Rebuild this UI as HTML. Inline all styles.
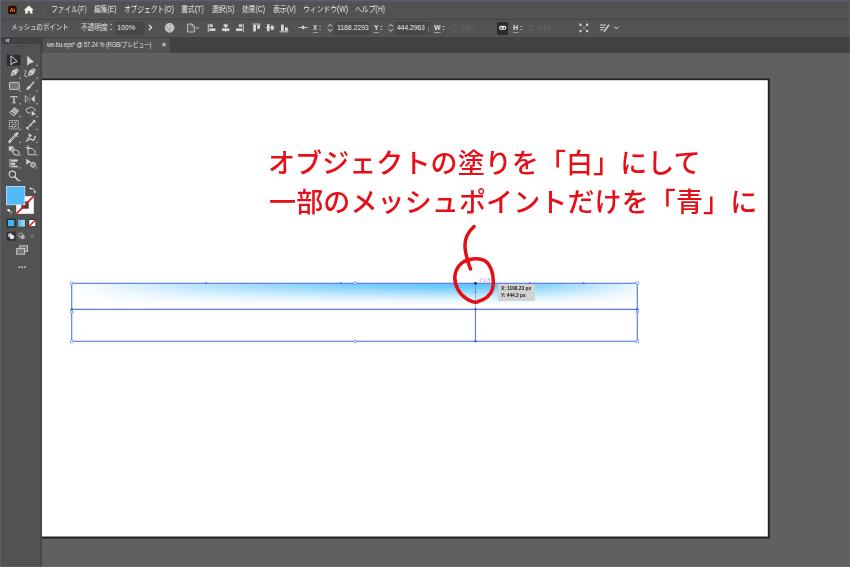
<!DOCTYPE html>
<html lang="ja">
<head>
<meta charset="utf-8">
<title>Illustrator mesh</title>
<style>
html,body{margin:0;padding:0;}
body{width:850px;height:567px;overflow:hidden;position:relative;background:#606060;font-family:"Liberation Sans","Noto Sans CJK JP",sans-serif;color:#e6e6e6;}
.abs{position:absolute;}
#menubar{left:0;top:0;width:850px;height:19px;background:#525252;}
#topline{left:0;top:0;width:850px;height:2px;background:linear-gradient(#5b5d6a 0,#5b5d6a 50%,#55565c 50%,#55565c 100%);}
#sep1{left:0;top:19px;width:850px;height:1px;background:#454545;}
#ctrlbar{left:0;top:20px;width:850px;height:17px;background:#535353;}
#tabbar{left:0;top:37px;width:850px;height:15.5px;background:#424242;}
#tab{left:43px;top:38px;width:127px;height:14.5px;background:#535353;}
#canvas{left:42px;top:52.5px;width:808px;height:515px;background:#606060;}
#toolbar{left:0;top:44px;width:42px;height:523px;background:#525252;}
#tooledge{left:40.4px;top:44px;width:1.6px;height:523px;background:linear-gradient(90deg,#4c4c4c,#3e3e3e);}
#toolhead{left:0;top:37px;width:42px;height:7px;background:#424242;}
#leftedge{left:0;top:0;width:1.3px;height:567px;background:linear-gradient(#62667a,#58626c 30%,#596468);}
.t{position:absolute;white-space:nowrap;transform-origin:0 50%;will-change:transform;}
.menu{font-size:8.4px;line-height:10px;top:4.2px;color:#ececec;}
.ctl{font-size:7.6px;line-height:10px;top:23.2px;color:#e6e6e6;}
.tabt{font-size:6.8px;line-height:9px;top:40px;color:#ececec;}
.field{position:absolute;top:22px;height:12.5px;background:#484848;border-radius:1px;}
.dim{color:#6e6e6e;}
.note{will-change:transform;position:absolute;color:#e60f18;font-weight:500;font-size:25px;line-height:30px;white-space:nowrap;transform-origin:0 50%;}
.tip{will-change:transform;position:absolute;left:497.5px;top:283.5px;width:36.5px;height:16.5px;background:#d2d2d2;border-radius:1px;}
.tip div{position:absolute;left:3px;font-size:4.8px;line-height:6px;color:#1c1c1c;font-weight:bold;white-space:nowrap;}
</style>
</head>
<body>
<div id="canvas" class="abs"></div>
<svg class="abs" style="left:0;top:0" width="850" height="567" viewBox="0 0 850 567">
  <rect x="42" y="78.4" width="727.8" height="460.2" fill="#242424"/>
  <rect x="42" y="80.2" width="725.8" height="456.3" fill="#ffffff"/>
</svg>

<div id="menubar" class="abs"></div>
<div id="topline" class="abs"></div>
<div id="sep1" class="abs"></div>
<div id="ctrlbar" class="abs"></div>
<div id="tabbar" class="abs"></div>
<div id="tab" class="abs"></div>
<div id="toolhead" class="abs"></div>
<div id="toolbar" class="abs"></div>
<div id="tooledge" class="abs"></div>
<div id="leftedge" class="abs"></div>
<div class="abs" style="left:848.8px;top:0;width:1.2px;height:567px;background:rgba(255,255,255,0.07)"></div>
<div class="abs" style="left:0;top:566px;width:850px;height:1px;background:rgba(255,255,255,0.07)"></div>

<div class="field" style="left:115px;width:30px"></div>
<div class="field" style="left:334px;width:36px"></div>
<div class="field" style="left:395px;width:36px"></div>
<div class="field" style="left:497px;width:10.5px;background:#2c2c2c"></div>
<div class="t menu" id="t0" style="left:50.6px;transform:scaleX(0.803)">ファイル(F)</div>
<div class="t menu" id="t1" style="left:93.5px;transform:scaleX(0.806)">編集(E)</div>
<div class="t menu" id="t2" style="left:123.5px;transform:scaleX(0.800)">オブジェクト(O)</div>
<div class="t menu" id="t3" style="left:181.3px;transform:scaleX(0.827)">書式(T)</div>
<div class="t menu" id="t4" style="left:212px;transform:scaleX(0.806)">選択(S)</div>
<div class="t menu" id="t5" style="left:242px;transform:scaleX(0.810)">効果(C)</div>
<div class="t menu" id="t6" style="left:272.6px;transform:scaleX(0.824)">表示(V)</div>
<div class="t menu" id="t7" style="left:303px;transform:scaleX(0.813)">ウィンドウ(W)</div>
<div class="t menu" id="t8" style="left:355.4px;transform:scaleX(0.816)">ヘルプ(H)</div>
<div class="t ctl" id="t9" style="left:10.5px;transform:scaleX(0.841)">メッシュのポイント</div>
<div class="t ctl" id="t10" style="left:81px;transform:scaleX(0.882)">不透明度：</div>
<div class="t ctl" id="t11" style="left:117px;color:#f2f2f2;transform:scaleX(0.926)">100%</div>
<div class="t ctl" id="t12" style="left:313px;font-weight:bold;transform:scaleX(0.823)">X :</div>
<div class="t ctl" id="t13" style="left:337px;color:#f2f2f2;transform:scaleX(0.897)">1168.2293</div>
<div class="t ctl" id="t14" style="left:373.8px;font-weight:bold;transform:scaleX(0.877)">Y :</div>
<div class="t ctl" id="t15" style="left:397.3px;color:#f2f2f2;transform:scaleX(0.880)">444.2963</div>
<div class="t ctl" id="t16" style="left:434px;font-weight:bold;transform:scaleX(0.906)">W :</div>
<div class="t ctl dim" id="t17" style="left:460.7px;transform:scaleX(0.857)">0 px</div>
<div class="t ctl" id="t18" style="left:513px;font-weight:bold;transform:scaleX(0.928)">H :</div>
<div class="t ctl dim" id="t19" style="left:537.6px;transform:scaleX(0.864)">0 px</div>
<div class="t tabt" id="t20" style="left:47.4px;transform:scaleX(0.826)">we-bu.eps* @ 57.24 % (RGB/プレビュー)</div>
<div class="t tabt" id="t21" style="left:161.5px;font-weight:bold;transform:scaleX(1.004)">×</div>
<div class="note" id="n0" style="left:268.20px;top:148.6px;font-size:27px;letter-spacing:0.093px">オブジェクトの塗りを「白」にして</div>
<div class="note" id="n1" style="left:268.80px;top:187.8px;font-size:27px;letter-spacing:0.129px">一部のメッシュポイントだけを「青」に</div>



<svg class="abs" style="left:0;top:0" width="850" height="567" viewBox="0 0 850 567">
  <defs>
    <linearGradient id="gv" x1="0" y1="0" x2="0" y2="1">
      <stop offset="0" stop-color="#fff" stop-opacity="0"/>
      <stop offset="0.15" stop-color="#fff" stop-opacity="0.10"/>
      <stop offset="0.4" stop-color="#fff" stop-opacity="0.5"/>
      <stop offset="0.62" stop-color="#fff" stop-opacity="0.82"/>
      <stop offset="0.8" stop-color="#fff" stop-opacity="0.98"/>
      <stop offset="0.86" stop-color="#fff" stop-opacity="1"/>
      <stop offset="1" stop-color="#fff" stop-opacity="1"/>
    </linearGradient>
    <linearGradient id="gh" x1="0" y1="0" x2="1" y2="0">
      <stop offset="0" stop-color="#ffffff"/>
      <stop offset="0.06" stop-color="#e9f6fe"/>
      <stop offset="0.23" stop-color="#b4e1fc"/>
      <stop offset="0.48" stop-color="#78cdfb"/>
      <stop offset="0.713" stop-color="#56c1fb"/>
      <stop offset="0.85" stop-color="#8fd5fb"/>
      <stop offset="0.94" stop-color="#c4e8fc"/>
      <stop offset="1" stop-color="#eef8fe"/>
    </linearGradient>
    <linearGradient id="gsw" x1="0" y1="0" x2="1" y2="0">
      <stop offset="0" stop-color="#46b8f8"/>
      <stop offset="1" stop-color="#a8defb"/>
    </linearGradient>
  </defs>
  <!-- mesh object -->
  <rect x="72" y="283" width="566" height="27" fill="url(#gh)"/>
  <rect x="72" y="283" width="566" height="27" fill="url(#gv)"/>
  <g fill="none" stroke="#5a7ee2" stroke-width="1.15">
    <rect x="71.7" y="283.3" width="565.6" height="58"/>
    <line x1="71.7" y1="309.3" x2="637.3" y2="309.3"/>
    <line x1="475.5" y1="309.3" x2="475.5" y2="341.3"/>
    <line x1="475.5" y1="283.3" x2="475.5" y2="309.3" stroke-width="0.8" stroke-opacity="0.75"/>
  </g>
  <g fill="#fff" stroke="#5a80e4" stroke-width="0.8">
    <circle cx="71.7" cy="283.3" r="1.5"/><circle cx="71.7" cy="341.3" r="1.5"/>
    <circle cx="637.3" cy="283.3" r="1.5"/><circle cx="637.3" cy="341.3" r="1.5"/>
    <circle cx="355" cy="283.3" r="1.3"/><circle cx="355" cy="341.3" r="1.3"/>
    <circle cx="71.7" cy="312" r="1.3"/><circle cx="637.3" cy="312" r="1.3"/>
  </g>
  <g fill="#4a68d8">
    <circle cx="206" cy="283.3" r="1"/><circle cx="341" cy="283.3" r="1"/>
    <circle cx="529.5" cy="283.3" r="1"/><circle cx="583.5" cy="283.3" r="1"/>
    <circle cx="71.7" cy="309.3" r="1.3"/><circle cx="637.3" cy="309.3" r="1.3"/>
    <circle cx="475.5" cy="309.3" r="1.3"/><circle cx="475.5" cy="341.3" r="1.3"/>
    <circle cx="475.5" cy="292" r="0.8"/>
    <circle cx="475.5" cy="283.3" r="1.4" fill="#1c2a70"/>
  </g>
  <text x="478.4" y="282.4" font-size="4.1" fill="#f03be0" font-family="Liberation Sans, Noto Sans CJK JP, sans-serif">アンカー</text>
  <!-- hand-drawn red marker -->
  <g fill="none" stroke="#e60f18" stroke-width="3.5" stroke-linecap="round" stroke-linejoin="round">
    <path d="M474 226.5 C468 232 464.5 239 465 247 C465.3 255 468 262 470.5 269"/>
    <path d="M468 260 C461 262 455.5 268 454.8 277 C454.5 286 460 295 467 299 C471 301.5 474.5 302.5 477 302 C484 300 490.5 296 492.5 289 C494.5 281 493 270 488 263.5 C484 258.5 476 257.5 468 260"/>
  </g>
  <!-- app logo + home -->
  <rect x="8.2" y="5.8" width="8.4" height="8.2" rx="1.6" fill="#2e0a00"/>
  <text x="12.4" y="12" font-size="5.4" font-weight="bold" text-anchor="middle" fill="#ff9a1f" font-family="Liberation Sans, sans-serif">Ai</text>
  <path d="M28.8 5.4 L23.8 10 H25.2 V13.6 H27.8 V11 H29.8 V13.6 H32.4 V10 H33.8 Z" fill="#f2f2f2"/>
  <rect x="43" y="4" width="0.7" height="12" fill="#5e5e5e"/>
  <!-- toolbar icons -->
  <text x="5.4" y="43.2" font-size="7.5" font-weight="bold" fill="#dcdcdc" font-family="Liberation Sans, sans-serif">«</text>
  <rect x="14" y="46" width="14" height="1" fill="#444"/>
<rect x="6.8" y="54.8" width="13.8" height="11" fill="#2d2d2d"/>
<g transform="translate(11.0 55.8) "><path d="M0 0 L0 9.1 L2.2 7.1 L6.2 5.7 Z" fill="none" stroke="#d2d2d2" stroke-width="1" stroke-linejoin="round"/></g>
<g transform="translate(27.4 56.2) "><path d="M0 0 L0 9.1 L2.2 7.1 L6.2 5.7 Z" fill="#d2d2d2" stroke="#d2d2d2" stroke-width="0.5" stroke-linejoin="round"/></g>
<g transform="translate(13.8 72.9) rotate(45)"><rect x="-1.9" y="-5.2" width="3.8" height="1.5" fill="#d2d2d2"/><path d="M-2 -3.2 H2 L2.7 -0.4 L0 5 L-2.7 -0.4 Z" fill="#d2d2d2"/><path d="M0 0.8 V5" stroke="#525252" stroke-width="0.6"/><circle cx="0" cy="0.4" r="0.7" fill="#525252"/></g>
<g transform="translate(31.0 72.9) rotate(45)"><rect x="-1.9" y="-5.2" width="3.8" height="1.5" fill="#d2d2d2"/><path d="M-2 -3.2 H2 L2.7 -0.4 L0 5 L-2.7 -0.4 Z" fill="#d2d2d2"/><path d="M0 0.8 V5" stroke="#525252" stroke-width="0.6"/><circle cx="0" cy="0.4" r="0.7" fill="#525252"/></g>
<g transform="translate(0.0 0.0) "><path d="M24.6 70.2 C26.6 70.4 26.2 72.4 25.2 73.6 C24 75.2 24.6 77 27 76.6" fill="none" stroke="#d2d2d2" stroke-width="0.9"/></g>
<g transform="translate(0.0 0.0) "><rect x="9.5" y="82.4" width="9.8" height="7" rx="0.6" fill="#777" stroke="#d2d2d2" stroke-width="0.9"/></g>
<g transform="translate(0.0 0.0) "><path d="M33.9 82 L29.2 87" stroke="#d2d2d2" stroke-width="1.3" stroke-linecap="round"/><path d="M29.8 86 C31 86.6 31 87.6 30.2 88.2 C28.8 89.6 27.6 89.6 26.2 90.2 C26.6 88.8 27 87.4 28 86.4 C28.6 85.8 29.2 85.6 29.8 86 Z" fill="#d2d2d2"/></g>
<text x="13.9" y="102.5" font-family="Liberation Serif, serif" font-size="11.2" text-anchor="middle" fill="#d2d2d2" stroke="#d2d2d2" stroke-width="0.25">T</text>
<g transform="translate(29.9 98.9) "><path d="M-4.6 -3.4 L-1.4 0 L-4.6 3.4 Z" fill="none" stroke="#d2d2d2" stroke-width="0.8"/><path d="M4.8 -3.6 L1.2 0 L4.8 3.6 Z" fill="#d2d2d2"/><path d="M0 -4.6 V4.6" stroke="#d2d2d2" stroke-width="0.6" stroke-dasharray="1.1 0.9"/></g>
<g transform="translate(13.8 111.8) "><path d="M0.6 -4.4 L4.8 -1 L0.2 4.2 L-4.2 0.8 Z" fill="#a8a8a8" stroke="#d2d2d2" stroke-width="0.8" stroke-linejoin="round"/><path d="M-2.8 -0.8 L1.6 2.6 L0.2 4.2 L-4.2 0.8 Z" fill="#525252" stroke="#d2d2d2" stroke-width="0.8" stroke-linejoin="round"/></g>
<g transform="translate(30.7 111.8) "><path d="M-4.4 -1 C-5 -3 -3 -4.2 -1.6 -3.6 C-0.8 -5 2 -5 2.6 -3.4 C4.6 -3.4 4.8 -1 3.4 -0.6 M-4.4 -1 C-4 1 -1.6 1.6 0 1.2" fill="none" stroke="#d2d2d2" stroke-width="0.9"/><path d="M1 -1.4 L1 4.4 L2.6 3 L5.2 2.8 Z" fill="#d2d2d2"/></g>
<g transform="translate(13.8 124.7) "><rect x="-4.4" y="-4.2" width="8.8" height="8.4" fill="none" stroke="#d2d2d2" stroke-width="0.9" stroke-dasharray="1.4 0.7"/><path d="M-2.6 -2.4 h1.6 M0.6 -2.4 h2 M-1.6 -0.4 h1.8 M1.4 -0.2 h1.4 M-3 1.6 h2 M0.2 1.8 h2.4 M-1.4 3 h1.2" stroke="#d2d2d2" stroke-width="1"/></g>
<g transform="translate(30.7 124.7) "><path d="M-4 4.2 L4 -4.2" stroke="#d2d2d2" stroke-width="1.2"/><path d="M-4.6 2.4 L-2.2 4.8 M2.4 -4.8 L4.8 -2.4" stroke="#d2d2d2" stroke-width="1.3"/><path d="M-1.4 -1.2 L1.2 1.4" stroke="#d2d2d2" stroke-width="0.8"/></g>
<g transform="translate(13.8 137.5) "><path d="M3.6 -4.2 L-3 2.6 L-4.4 4.6" stroke="#d2d2d2" stroke-width="2.3" stroke-linecap="round" fill="none"/><path d="M1.6 -2.2 L-2.8 2.4" stroke="#525252" stroke-width="0.8"/><path d="M0.6 -3.8 L3.6 -0.8" stroke="#d2d2d2" stroke-width="1.1"/></g>
<g transform="translate(30.7 137.5) "><path d="M-4.6 3.8 C-2.6 3.4 -2 1 -0.4 1.4 C1.2 1.8 1.6 3.2 3 2.4 C4.4 1.4 3.6 -0.6 5 -1.4" fill="none" stroke="#d2d2d2" stroke-width="1.3"/><path d="M-2.6 -4.4 L1.4 -2 L-1.4 0.2 Z" fill="#d2d2d2"/><path d="M-2 -0.6 L-3.6 2" stroke="#d2d2d2" stroke-width="0.9"/></g>
<g transform="translate(13.8 150.3) "><rect x="-5" y="-4" width="4.6" height="4.4" fill="#d2d2d2"/><rect x="-2.6" y="-1.8" width="4" height="3.6" fill="#9c9c9c"/><rect x="-0.8" y="-0.2" width="6.2" height="4.6" rx="2.2" fill="#525252" stroke="#d2d2d2" stroke-width="0.9" transform="rotate(25 2 2)"/></g>
<g transform="translate(30.7 150.3) "><path d="M-2.6 -1.8 H1.4 L4.4 0.8 V4.4 H-2.6 Z" fill="none" stroke="#d2d2d2" stroke-width="0.9"/><path d="M-5.2 -2.6 H-0.6 M-2.8 -5 V-0.4" stroke="#d2d2d2" stroke-width="0.9"/></g>
<g transform="translate(13.8 163.1) "><path d="M-3.8 -4.4 V4.4" stroke="#d2d2d2" stroke-width="0.9"/><rect x="-2.6" y="-3.6" width="6.4" height="2.2" fill="#d2d2d2"/><rect x="-2.6" y="-0.4" width="4" height="2.2" fill="#d2d2d2"/><rect x="-2.6" y="2.6" width="6.8" height="1.6" fill="#d2d2d2"/></g>
<g transform="translate(30.7 163.1) "><path d="M-4.4 -4.6 L-4.4 1.8 L-2.4 0 L1 -0.4 Z" fill="#d2d2d2"/><circle cx="2.4" cy="1.8" r="2.4" fill="#8a8a8a" stroke="#d2d2d2" stroke-width="1"/></g>
<g transform="translate(13.8 175.9) "><circle cx="-1.4" cy="-1.6" r="3.2" fill="none" stroke="#d2d2d2" stroke-width="1.1"/><path d="M1 0.9 L4.6 4.6" stroke="#d2d2d2" stroke-width="1.6" stroke-linecap="round"/></g>
<rect x="36.3" y="64.8" width="1.2" height="1.2" fill="#d2d2d2"/>
<rect x="19.4" y="77.6" width="1.2" height="1.2" fill="#d2d2d2"/>
<rect x="36.3" y="77.6" width="1.2" height="1.2" fill="#d2d2d2"/>
<rect x="19.4" y="90.4" width="1.2" height="1.2" fill="#d2d2d2"/>
<rect x="36.3" y="90.4" width="1.2" height="1.2" fill="#d2d2d2"/>
<rect x="19.4" y="103.2" width="1.2" height="1.2" fill="#d2d2d2"/>
<rect x="36.3" y="103.2" width="1.2" height="1.2" fill="#d2d2d2"/>
<rect x="19.4" y="116.0" width="1.2" height="1.2" fill="#d2d2d2"/>
<rect x="36.3" y="116.0" width="1.2" height="1.2" fill="#d2d2d2"/>
<rect x="19.4" y="128.9" width="1.2" height="1.2" fill="#d2d2d2"/>
<rect x="36.3" y="128.9" width="1.2" height="1.2" fill="#d2d2d2"/>
<rect x="19.4" y="141.7" width="1.2" height="1.2" fill="#d2d2d2"/>
<rect x="36.3" y="141.7" width="1.2" height="1.2" fill="#d2d2d2"/>
<rect x="19.4" y="154.5" width="1.2" height="1.2" fill="#d2d2d2"/>
<rect x="36.3" y="154.5" width="1.2" height="1.2" fill="#d2d2d2"/>
<rect x="19.4" y="167.3" width="1.2" height="1.2" fill="#d2d2d2"/>
<rect x="36.3" y="167.3" width="1.2" height="1.2" fill="#d2d2d2"/>
<rect x="19.4" y="180.1" width="1.2" height="1.2" fill="#d2d2d2"/>


  <!-- fill / stroke -->
  <rect x="16.2" y="196.2" width="17.6" height="17.6" fill="#fff"/>
  <rect x="21.3" y="201.3" width="7.4" height="7.4" fill="#3a3a3a"/>
  <path d="M16.4 213.6 L33.6 196.4" stroke="#e81010" stroke-width="1.5"/>
  <rect x="6.4" y="186.4" width="18.4" height="18.4" fill="#52baf9" stroke="#c8e6fa" stroke-width="0.8"/>
  <g transform="translate(2 0.4)"><path d="M28.6 188.2 C31 187.6 32.8 189 32.8 191.6" fill="none" stroke="#d8d8d8" stroke-width="1"/>
  <path d="M28.8 186.6 L27.2 188.4 L29.4 189.6 Z M31.4 191 L32.8 193.2 L34.2 191 Z" fill="#d8d8d8"/></g>
  <circle cx="9.4" cy="210.9" r="3.2" fill="#2a2a2a" stroke="#8a8a8a" stroke-width="0.5"/>
  <circle cx="8.8" cy="210.2" r="1.5" fill="#f0f0f0"/>
  <circle cx="10.6" cy="212" r="1.1" fill="none" stroke="#f0f0f0" stroke-width="0.6"/>
  <!-- color / gradient / none -->
  <rect x="6.6" y="218.6" width="9" height="9" fill="#2c2c2c"/>
  <rect x="8" y="220" width="6.2" height="6.2" fill="#45b3f7"/>
  <rect x="17.6" y="219" width="8.2" height="8.2" fill="#333"/>
  <rect x="18.6" y="220" width="6.2" height="6.2" fill="url(#gsw)" stroke="#bfe4fb" stroke-width="0.5"/>
  <rect x="28.2" y="219" width="8.2" height="8.2" fill="#333"/>
  <rect x="29.2" y="220" width="6.2" height="6.2" fill="#fff"/>
  <path d="M29.2 226.2 L35.4 220" stroke="#e81010" stroke-width="1.3"/>
  <!-- draw modes -->
  <rect x="6.6" y="231.6" width="9" height="9" fill="#2e2e2e"/>
  <circle cx="10.2" cy="235.2" r="2.3" fill="#bdbdbd"/><circle cx="12" cy="237" r="2.3" fill="#e4e4e4"/>
  <circle cx="20.8" cy="235.2" r="2.3" fill="none" stroke="#c8c8c8" stroke-width="0.7"/><circle cx="22.6" cy="237" r="2.3" fill="#b0b0b0"/>
  <circle cx="32.2" cy="236.2" r="2.2" fill="#686868"/>
  <!-- screen mode -->
  <rect x="19.6" y="245.8" width="8" height="5.6" fill="#7a7a7a" stroke="#d6d6d6" stroke-width="0.8"/>
  <rect x="16.6" y="248.6" width="8" height="5.6" fill="#7a7a7a" stroke="#d6d6d6" stroke-width="0.8"/>
  <g fill="#dcdcdc"><rect x="18.6" y="266.4" width="1.5" height="1.5"/><rect x="21.4" y="266.4" width="1.5" height="1.5"/><rect x="24.2" y="266.4" width="1.5" height="1.5"/></g>


  <!-- control bar icons -->
  <path d="M149 25 L151.6 27.5 L149 30" fill="none" stroke="#ececec" stroke-width="1.1"/>
  <circle cx="169.6" cy="27.8" r="4.4" fill="#a9a9a9" stroke="#e2e2e2" stroke-width="0.8"/>
  <path d="M166.6 25.4 C168.4 24.4 170 25.4 169.2 27 C168.6 28.4 167 28.2 166.8 30 M171 25 C172.6 26.4 172.4 28.8 170.8 30.6" fill="none" stroke="#efefef" stroke-width="0.9"/>
  <path d="M187.6 24 H192 L194.4 26.2 V32 H187.6 Z" fill="#5e5e5e" stroke="#d4d4d4" stroke-width="0.8"/>
  <path d="M192 24 V26.2 H194.4" fill="none" stroke="#d4d4d4" stroke-width="0.6"/>
  <path d="M195.6 27 L197.2 28.8 L198.8 27" fill="none" stroke="#d4d4d4" stroke-width="0.9"/>
  <g fill="#d4d4d4">
   <rect x="207.8" y="23.6" width="0.9" height="8.6"/><rect x="209.4" y="24.4" width="3.4" height="2.4"/><rect x="209.4" y="28.4" width="6" height="2.6"/>
   <rect x="225.2" y="23.6" width="0.9" height="8.6"/><rect x="223.6" y="24.4" width="4.2" height="2.4"/><rect x="222" y="28.4" width="7.4" height="2.6"/>
   <rect x="242.8" y="23.6" width="0.9" height="8.6"/><rect x="238.8" y="24.4" width="3.4" height="2.4"/><rect x="236" y="28.4" width="6.2" height="2.6"/>
   <rect x="252.4" y="23.6" width="8.4" height="0.9"/><rect x="253.2" y="25" width="2.8" height="6.4"/><rect x="257.2" y="25" width="2.8" height="3.8"/>
   <rect x="265.6" y="27.2" width="9" height="0.9"/><rect x="267" y="24.2" width="2.6" height="7"/><rect x="271" y="25.4" width="2.6" height="4.6"/>
   <rect x="279.4" y="31.4" width="9.2" height="0.9"/><rect x="281" y="24.6" width="2.8" height="6.4"/><rect x="285" y="27.4" width="2.8" height="3.6"/>
   <rect x="298.6" y="27" width="9.2" height="0.9"/><rect x="302.2" y="25.6" width="2" height="3.6"/>
   <rect x="313" y="32.2" width="5" height="0.6"/><rect x="373.8" y="32.2" width="5" height="0.6"/><rect x="434" y="32.2" width="6.6" height="0.6"/><rect x="513" y="32.2" width="5.4" height="0.6"/>
   <rect x="428.2" y="26" width="0.7" height="6" fill="#8a8a8a"/>
  </g>
  <g fill="none" stroke="#e0e0e0" stroke-width="0.9">
   <path d="M327.8 26.4 L330 24.4 L332.2 26.4 M327.8 29.2 L330 31.2 L332.2 29.2"/>
   <path d="M388.6 26.4 L390.8 24.4 L393 26.4 M388.6 29.2 L390.8 31.2 L393 29.2"/>
  </g>
  <g fill="none" stroke="#6e6e6e" stroke-width="0.9">
   <path d="M452 26.4 L454.2 24.4 L456.4 26.4 M452 29.2 L454.2 31.2 L456.4 29.2"/>
   <path d="M528.6 26.4 L530.8 24.4 L533 26.4 M528.6 29.2 L530.8 31.2 L533 29.2"/>
  </g>
  <g fill="none" stroke="#f0f0f0" stroke-width="1.1"><rect x="499.6" y="26.4" width="3.6" height="2.8" rx="1.4"/><rect x="502.2" y="26.4" width="3.6" height="2.8" rx="1.4"/></g>
  <g fill="#d4d4d4"><rect x="579.4" y="23.6" width="2.2" height="2.2"/><rect x="586" y="23.6" width="2.2" height="2.2"/><rect x="579.4" y="30" width="2.2" height="2.2"/><rect x="586" y="30" width="2.2" height="2.2"/></g>
  <path d="M581.4 25.6 L586.2 30.2 M586.2 25.6 L581.4 30.2" stroke="#a8a8a8" stroke-width="0.6"/>
  <path d="M600.2 25 H606 M600.2 27.4 H604.6 M600.2 29.8 H603.4" stroke="#d4d4d4" stroke-width="1"/>
  <path d="M608.4 24.2 L604 30.6 L603.6 32.2 L605.2 31.4 L609.6 25 Z" fill="#d4d4d4"/>
  <path d="M614.2 26.6 L616.4 28.8 L618.6 26.6" fill="none" stroke="#e6e6e6" stroke-width="1"/>

</svg>
<div class="tip"><div style="top:2.2px">X: 1168.23 px</div><div style="top:8.6px">Y: 444.3 px</div></div>
</body>
</html>
